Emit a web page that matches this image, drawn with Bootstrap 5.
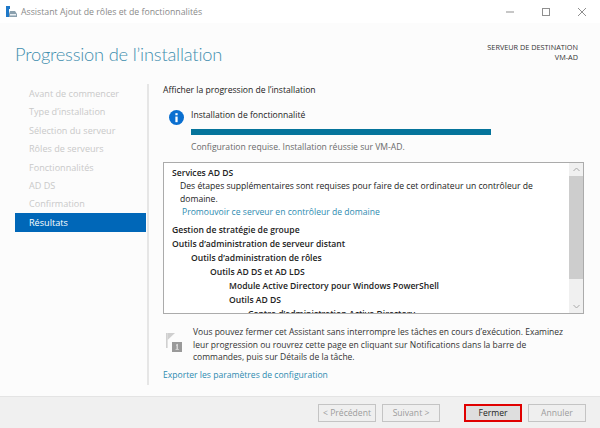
<!DOCTYPE html>
<html lang="fr">
<head>
<meta charset="utf-8">
<title>Assistant Ajout de rôles et de fonctionnalités</title>
<link href="https://cdn.jsdelivr.net/npm/bootstrap@5.3.0/dist/css/bootstrap.min.css" rel="stylesheet">
<style>
html,body{height:428px;width:600px;overflow:hidden}
body{font-family:"Open Sans","Noto Sans","Liberation Sans",sans-serif;font-size:8.6px;line-height:12px;color:#222;background:#fcfcfc}
.wiz-title{height:23px;background:#fff;padding-left:6px;color:#8a8a8a;font-size:8.75px}
.wiz-title .ttl{margin-left:4px}
.win-btns{margin-left:auto;padding-right:14px;gap:28px}
.wiz-head{height:61px;padding:6px 22px 0 15px}
.wiz-h1{font-family:Lato,"Open Sans",sans-serif;font-size:18.3px;letter-spacing:-.2px;line-height:50px;font-weight:300;color:#3f8eae;margin:0}
.dest{font-size:7.3px;line-height:10px;padding-top:13px;text-align:right;color:#333}
.wiz-body{height:312px;padding-left:15px}
.side{width:131px;color:#c9c9c9;font-size:9.1px}
.side div{height:18.4px;line-height:20px;padding-left:14px}
.side .cur{background:#0067b8;color:#fff;height:19px}
.vline{width:2px;background:#e6e6e6;margin:0 14px 11px 1px}
.wiz-main{width:421px}
.lead-line{height:14px;line-height:12px}
.prog-wrap{padding:11px 0 0 6px;height:64px}
.prog-ico{margin-top:1px}
.prog-body{margin-left:7px}
.prog-txt{line-height:12px}
.prog-bar{height:6px;background:#05749b;width:300px;margin:8px 0 6px}
.muted-line{color:#6a6a6a}
.res-box{height:152px;border:1px solid #ababab;background:#fff;overflow:hidden}
.res-txt{flex:1;padding:3px 8px;overflow:hidden;font-size:8.6px}
.res-txt .hd{font-weight:600;color:#222;line-height:14px}
.res-txt .i1{padding-left:19px}.res-txt .i2{padding-left:38px}.res-txt .i3{padding-left:57px}.res-txt .i4{padding-left:76px}
.res-txt .ds{padding-left:8px;line-height:12.6px}
.res-txt a{display:block;padding-left:10px;line-height:13px;margin:1px 0 4px}
a,a:hover{color:#2e8bb0;text-decoration:none}
.sb{width:14px;background:#f0f0f0}
.sb-thumb{height:103px;background:#cdcdcd}
.sb-btn{height:13px}
.note{padding:12px 0 0 3px;gap:9px;color:#333;line-height:12.5px;font-size:8.5px}
.note-ico{margin-top:6px}
.note-txt{width:380px}
.export{margin-top:5px;line-height:13px}
.wiz-foot{height:32px;background:#f0f0f0;border-top:1px solid #e4e4e4;padding:7px 14px 0 0;justify-content:flex-end}
.wbtn{height:18px;width:58px;border:1px solid #bdbdbd;background:#efefef;color:#9c9c9c;font-size:8.6px;line-height:16px;padding:0;border-radius:0;margin-left:6px;text-align:center}
.wbtn:disabled{opacity:1;background:#efefef;border-color:#c4c4c4;color:#9c9c9c}
.wbtn-main{background:#dedede;border:2px solid #e00000;color:#222;line-height:14px;margin-left:24px}
</style>
</head>
<body>
<div class="wiz-title d-flex align-items-center">
  <svg width="11" height="11" viewBox="0 0 11 11"><rect x="0" y="0" width="4" height="3" fill="#1e78c8"/><rect x="0" y="3" width="3" height="8" fill="#1e78c8"/><path d="M3 8l1-3h5l2 3v3H3z" fill="#8aa0ae"/><rect x="4" y="8" width="6" height="1.5" fill="#e8eef2"/></svg>
  <span class="ttl">Assistant Ajout de rôles et de fonctionnalités</span>
  <div class="win-btns d-flex align-items-center">
    <svg width="8" height="8" viewBox="0 0 8 8"><path d="M0 4h8" stroke="#8f8f8f"/></svg>
    <svg width="8" height="8" viewBox="0 0 8 8"><rect x=".5" y=".5" width="7" height="7" fill="none" stroke="#8f8f8f"/></svg>
    <svg width="8" height="8" viewBox="0 0 8 8"><path d="M0 0l8 8M8 0L0 8" stroke="#8f8f8f"/></svg>
  </div>
</div>
<div class="wiz-head d-flex justify-content-between">
  <h1 class="wiz-h1">Progression de l’installation</h1>
  <div class="dest">SERVEUR DE DESTINATION<br>VM-AD</div>
</div>
<div class="wiz-body d-flex">
  <div class="side">
    <div>Avant de commencer</div>
    <div>Type d’installation</div>
    <div>Sélection du serveur</div>
    <div>Rôles de serveurs</div>
    <div>Fonctionnalités</div>
    <div>AD DS</div>
    <div>Confirmation</div>
    <div class="cur">Résultats</div>
  </div>
  <div class="vline"></div>
  <div class="wiz-main">
    <div class="lead-line">Afficher la progression de l’installation</div>
    <div class="prog-wrap d-flex">
      <svg class="prog-ico flex-shrink-0" width="15" height="15" viewBox="0 0 16 16"><circle cx="8" cy="8" r="8" fill="#0a6fd0"/><rect x="6.8" y="7" width="2.4" height="6" fill="#fff"/><rect x="6.8" y="3.4" width="2.4" height="2.2" fill="#fff"/></svg>
      <div class="prog-body flex-grow-1">
        <div class="prog-txt">Installation de fonctionnalité</div>
        <div class="prog-bar"></div>
        <div class="muted-line">Configuration requise. Installation réussie sur VM-AD.</div>
      </div>
    </div>
    <div class="res-box d-flex">
      <div class="res-txt">
        <div class="hd">Services AD DS</div>
        <div class="ds">Des étapes supplémentaires sont requises pour faire de cet ordinateur un contrôleur de domaine.</div>
        <a href="#">Promouvoir ce serveur en contrôleur de domaine</a>
        <div class="hd">Gestion de stratégie de groupe</div>
        <div class="hd">Outils d’administration de serveur distant</div>
        <div class="hd i1">Outils d’administration de rôles</div>
        <div class="hd i2">Outils AD DS et AD LDS</div>
        <div class="hd i3">Module Active Directory pour Windows PowerShell</div>
        <div class="hd i3">Outils AD DS</div>
        <div class="hd i4">Centre d’administration Active Directory</div>
      </div>
      <div class="sb d-flex flex-column">
        <div class="sb-btn d-flex align-items-center justify-content-center"><svg width="7" height="5" viewBox="0 0 7 5"><path d="M.5 4l3-3 3 3" fill="none" stroke="#a8a8a8"/></svg></div>
        <div class="sb-thumb"></div>
        <div class="flex-grow-1"></div>
        <div class="sb-btn d-flex align-items-center justify-content-center"><svg width="7" height="5" viewBox="0 0 7 5"><path d="M.5 1l3 3 3-3" fill="none" stroke="#a8a8a8"/></svg></div>
      </div>
    </div>
    <div class="note d-flex">
      <svg class="note-ico flex-shrink-0" width="18" height="22" viewBox="0 0 18 22"><rect x="0" y="1" width="1.6" height="15" fill="#d0d0d0"/><path d="M1.6 1H9L1.6 8z" fill="#cfcfcf"/><rect x="6" y="10" width="10" height="10" fill="#9a9a9a"/><path d="M10.2 12.6l1.6-.8v6h-1.2v-4.4l-.6.3zM9.6 17h3.2v.8H9.6z" fill="#e6e6e6"/></svg>
      <div class="note-txt">Vous pouvez fermer cet Assistant sans interrompre les tâches en cours d’exécution. Examinez leur progression ou rouvrez cette page en cliquant sur Notifications dans la barre de commandes, puis sur Détails de la tâche.</div>
    </div>
    <div class="export"><a href="#">Exporter les paramètres de configuration</a></div>
  </div>
</div>
<div class="wiz-foot d-flex">
  <button class="btn wbtn" disabled>&lt; Précédent</button>
  <button class="btn wbtn" disabled>Suivant &gt;</button>
  <button class="btn wbtn wbtn-main">Fermer</button>
  <button class="btn wbtn" disabled>Annuler</button>
</div>
<script src="https://cdn.jsdelivr.net/npm/bootstrap@5.3.0/dist/js/bootstrap.bundle.min.js"></script>
</body>
</html>
